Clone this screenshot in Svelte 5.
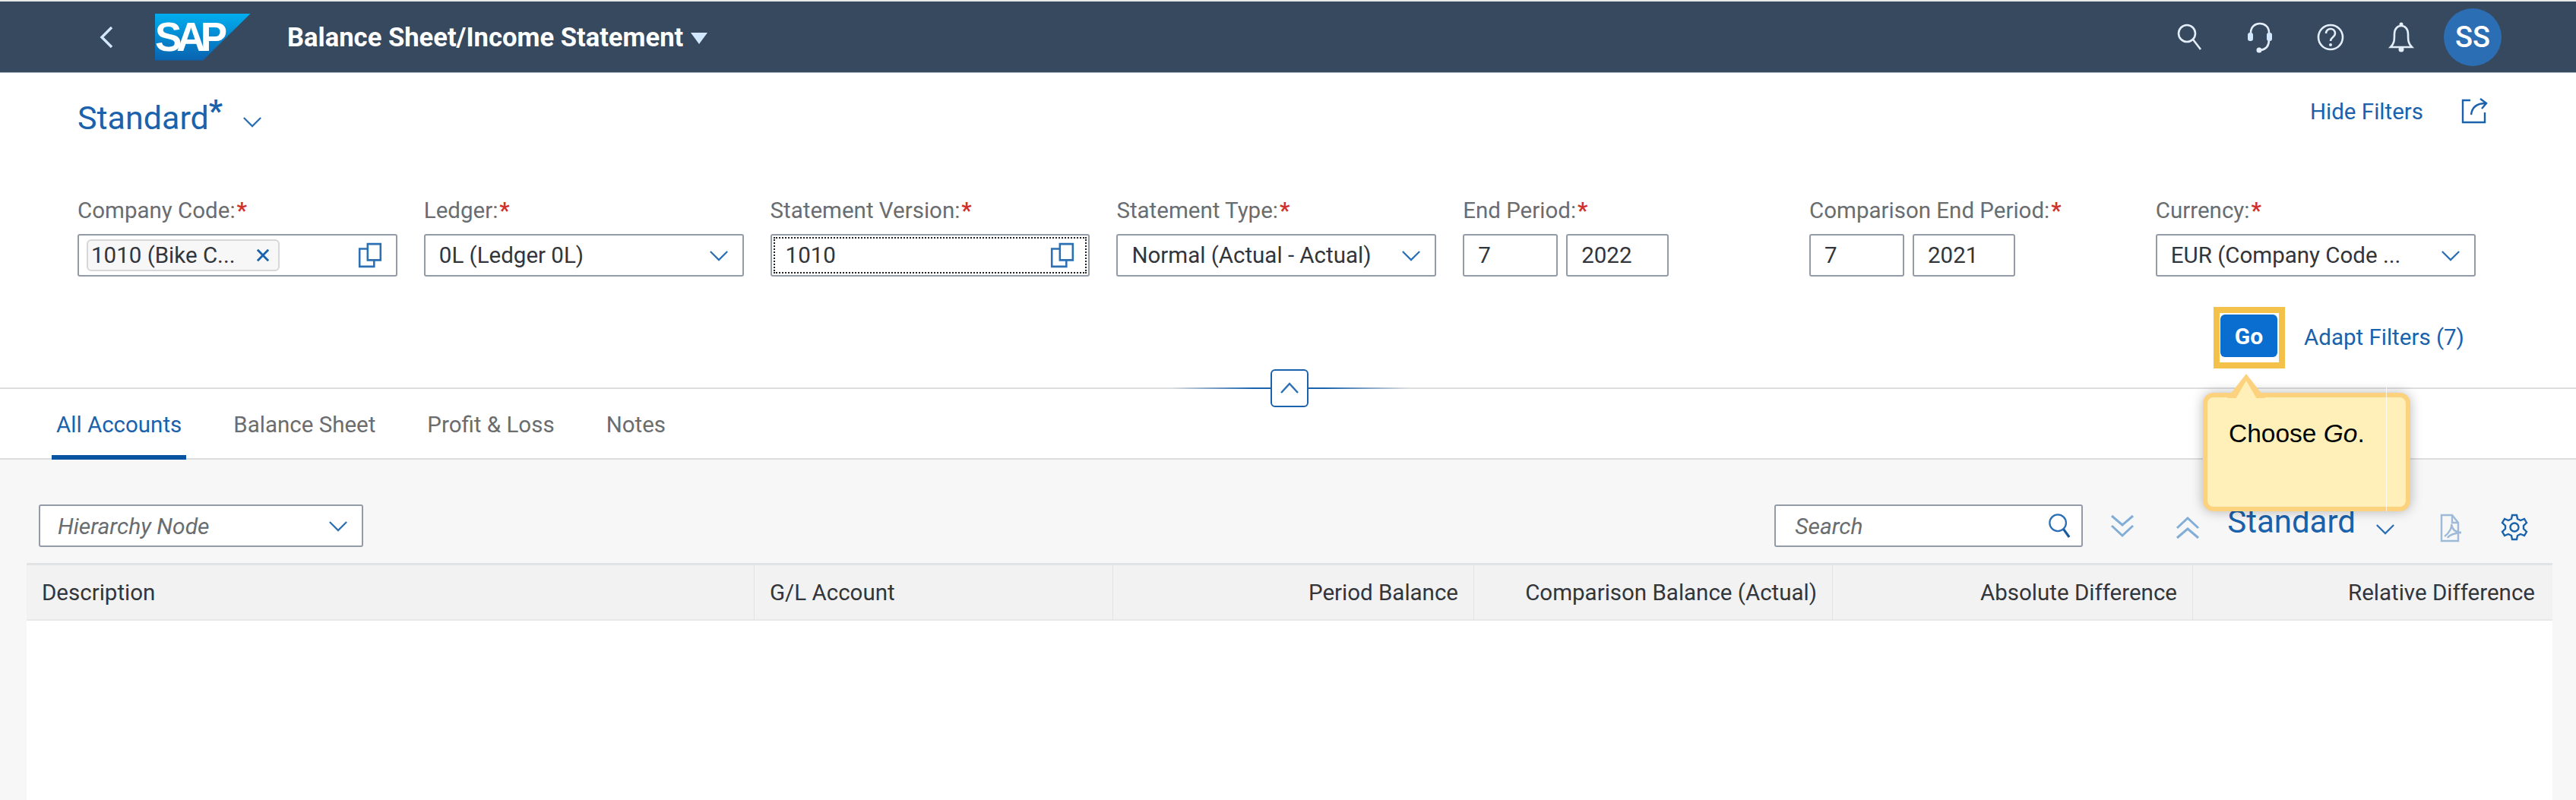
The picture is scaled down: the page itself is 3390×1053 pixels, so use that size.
<script>
	const filters = [
		{ label: 'Company Code:', kind: 'token', token: '1010 (Bike C...' },
		{ label: 'Ledger:', kind: 'select', value: '0L (Ledger 0L)' },
		{ label: 'Statement Version:', kind: 'value', value: '1010' },
		{ label: 'Statement Type:', kind: 'select', value: 'Normal (Actual - Actual)' },
		{ label: 'End Period:', kind: 'pair', first: '7', second: '2022' },
		{ label: 'Comparison End Period:', kind: 'pair', first: '7', second: '2021' },
		{ label: 'Currency:', kind: 'select', value: 'EUR (Company Code ...' }
	];
	const tabs = ['All Accounts', 'Balance Sheet', 'Profit & Loss', 'Notes'];
	const columns = [
		{ title: 'Description' },
		{ title: 'G/L Account' },
		{ title: 'Period Balance', right: true },
		{ title: 'Comparison Balance (Actual)', right: true },
		{ title: 'Absolute Difference', right: true },
		{ title: 'Relative Difference', right: true }
	];
</script>

{#snippet chevron()}
	<svg class="chev" viewBox="0 0 28 16"><path d="M2 2 L14 14 L26 2" /></svg>
{/snippet}

{#snippet copyIcon()}
	<svg class="copy" viewBox="0 0 30 32"><path d="M11 8 H2 V30 H20 V22 M12 2 H28 V22 H12 Z" /></svg>
{/snippet}

<div class="page">
	<header class="shell">
		<svg class="back" viewBox="0 0 20 32"><path d="M17 3 L4 16 L17 29" /></svg>
		<div class="logo"><span>SAP</span></div>
		<h1>Balance Sheet/Income Statement</h1>
		<span class="caret"></span>
		<div class="shell-icons">
			<svg viewBox="0 0 36 42"><circle cx="15" cy="16" r="11" /><path d="M23 24 L33 37" /></svg>
			<svg viewBox="0 0 36 42"><path d="M6 24 V15 C6 -1 30 -1 30 15 V24 C30 33 26 37 19 38" /><rect class="solid-dim" x="2" y="15" width="7" height="11" rx="3" /><rect class="solid-dim" x="27" y="15" width="7" height="11" rx="3" /><circle class="solid" cx="17" cy="38" r="3.5" /></svg>
			<svg viewBox="0 0 36 42"><circle cx="18" cy="21" r="16" /><path d="M12 16 C12 8 24 8 24 16 C24 21 18 21 18 26" /><circle class="solid" cx="18" cy="31" r="2" /></svg>
			<svg viewBox="0 0 36 42"><path d="M4 34 C9 29 9 25 9 17 C9 10 13 6 18 6 C23 6 27 10 27 17 C27 25 27 29 32 34 Z" /><circle class="solid" cx="18" cy="4" r="2.5" /><circle class="solid" cx="18" cy="37" r="3.5" /></svg>
		</div>
		<div class="avatar">SS</div>
	</header>

	<section class="filterbar">
		<div class="variant-row">
			<div class="variant">Standard<span class="star">*</span></div>
			{@render chevron()}
			<a class="hide">Hide Filters</a>
			<svg class="share" viewBox="0 0 36 34"><path d="M12 3 H2 V32 H31 V19 M13 22 C14 13 20 7 32 7 M25 1 L33 7 L27 14" /></svg>
		</div>

		<div class="filters">
			{#each filters as f}
				<div class="field">
					<div class="label">{f.label}<span class="req">*</span></div>
					{#if f.kind === 'pair'}
						<div class="pair">
							<div class="input first">{f.first}</div>
							<div class="input second">{f.second}</div>
						</div>
					{:else if f.kind === 'token'}
						<div class="input with-token">
							<span class="token">{f.token}<svg viewBox="0 0 14 14"><path d="M2 2 L12 12 M12 2 L2 12" /></svg></span>
							{@render copyIcon()}
						</div>
					{:else if f.kind === 'value'}
						<div class="input focused">
							<span>{f.value}</span>
							{@render copyIcon()}
						</div>
					{:else}
						<div class="input">
							<span>{f.value}</span>
							{@render chevron()}
						</div>
					{/if}
				</div>
			{/each}
		</div>

		<div class="actions">
			<div class="highlight"><button class="go">Go</button></div>
			<a class="adapt">Adapt Filters (7)</a>
		</div>

		<div class="collapse">
			<span class="glow"></span>
			<button aria-label="Collapse"><svg viewBox="0 0 26 16"><path d="M2 14 L13 2 L24 14" /></svg></button>
		</div>
	</section>

	<nav class="tabs">
		{#each tabs as tab, i}
			<div class="tab" class:active={i === 0}>{tab}</div>
		{/each}
	</nav>

	<main class="content">
		<div class="toolbar">
			<div class="input hierarchy">
				<span>Hierarchy Node</span>
				{@render chevron()}
			</div>
			<div class="tools">
				<div class="input search">
					<span>Search</span>
					<svg viewBox="0 0 32 36"><circle cx="14" cy="14" r="11.5" /><path class="dark" d="M22 23 L30 34" /></svg>
				</div>
				<svg class="dbl down" viewBox="0 0 32 32"><path d="M2 3 L16 15 L30 3 M2 16 L16 29 L30 16" /></svg>
				<svg class="dbl up" viewBox="0 0 32 32"><path d="M2 16 L16 3 L30 16 M2 29 L16 17 L30 29" /></svg>
				<div class="view">Standard</div>
				{@render chevron()}
				<svg class="pdf" viewBox="0 0 32 38"><path d="M18 2 H4 V36 H26 V12 Z M18 2 V12 H26 M8 30 C14 26 18 18 17 14 C18 20 22 25 30 25 C24 25 14 28 12 32" /></svg>
				<svg class="gear" viewBox="0 0 36 36"><circle cx="18" cy="18" r="5.5" /><path d="M15 2 H21 L22 7 L26 9 L31 7 L34 12 L30 16 V20 L34 24 L31 29 L26 27 L22 29 L21 34 H15 L14 29 L10 27 L5 29 L2 24 L6 20 V16 L2 12 L5 7 L10 9 L14 7 Z" /></svg>
			</div>
		</div>

		<div class="table">
			<div class="thead">
				{#each columns as c}
					<div class="th" class:right={c.right}>{c.title}</div>
				{/each}
			</div>
			<div class="tbody"></div>
		</div>
	</main>

	<div class="callout">
		<span class="tail"></span>
		<span class="seam"></span>
		<p>Choose <em>Go</em>.</p>
	</div>
</div>

<style>
	:global(body) {
		margin: 0;
		background: #fff;
	}

	.page {
		position: relative;
		width: 3390px;
		height: 1053px;
		overflow: hidden;
		display: flex;
		flex-direction: column;
		font-family: Roboto, "Liberation Sans", sans-serif;
		font-size: 29.5px;
		color: #32363a;
	}

	svg {
		display: block;
		flex: none;
		fill: none;
		stroke-width: 2.4;
	}

	/* shell bar */
	.shell {
		flex: none;
		box-sizing: border-box;
		height: 96px;
		border-top: 2px solid #e6e8ea;
		border-bottom: 1px solid #aab4bf;
		background: #37495e;
		display: flex;
		align-items: center;
		color: #fff;
	}

	.back {
		width: 20px;
		height: 32px;
		margin-left: 130px;
		stroke: #d1e8ff;
		stroke-width: 3.4;
	}

	.logo {
		width: 126px;
		height: 62px;
		margin-left: 54px;
		background: linear-gradient(#00aeef, #0a62b0);
		clip-path: polygon(0 0, 100% 0, 50% 100%, 0 100%);
	}

	.logo span {
		display: block;
		margin: 1px 0 0 0;
		font: bold 53px/60px "Liberation Sans", sans-serif;
		letter-spacing: -7px;
		color: #fff;
	}

	h1 {
		margin: 0 0 0 48px;
		font-size: 34.6px;
		font-weight: 700;
		white-space: nowrap;
	}

	.caret {
		width: 0;
		height: 0;
		margin: 4px 0 0 10px;
		border-left: 11px solid transparent;
		border-right: 11px solid transparent;
		border-top: 15px solid #d1e8ff;
	}

	.shell-icons {
		margin-left: auto;
		display: flex;
		gap: 57px;
	}

	.shell-icons svg {
		width: 36px;
		height: 42px;
		stroke: #e3eefa;
		stroke-width: 2.6;
	}

	.shell-icons .solid {
		fill: #e3eefa;
		stroke: none;
	}

	.shell-icons .solid-dim {
		fill: #d1e8ff;
		stroke: none;
	}

	.avatar {
		width: 76px;
		height: 76px;
		margin: 0 98px 0 38px;
		border-radius: 50%;
		background: #2b6eb4;
		font-size: 38px;
		font-weight: 500;
		display: flex;
		align-items: center;
		justify-content: center;
	}

	/* filter bar */
	.filterbar {
		position: relative;
		flex: none;
		box-sizing: border-box;
		height: 416px;
		padding: 0 0 0 102px;
		border-bottom: 2px solid #dcdddf;
	}

	.variant-row {
		height: 108px;
		display: flex;
		align-items: center;
		padding-right: 115px;
	}

	.variant {
		font-size: 43px;
		color: #1a62ab;
		padding-top: 9px;
	}

	.star {
		position: relative;
		top: -10px;
		font-size: 40px;
		line-height: 1;
		font-weight: 700;
	}

	.chev {
		width: 26px;
		height: 15px;
		stroke: #2b6fb5;
		stroke-width: 2.4;
	}

	.variant-row > .chev {
		margin: 21px 0 0 26px;
	}

	.hide {
		margin-left: auto;
		color: #1a62ab;
		padding-bottom: 6px;
	}

	.share {
		width: 36px;
		height: 34px;
		margin: 0 0 8px 50px;
		stroke: #1a62ab;
	}

	.filters {
		display: grid;
		grid-template-columns: repeat(7, 420.8px);
		column-gap: 35px;
		padding-top: 58px;
	}

	.label {
		height: 36px;
		line-height: 30px;
		margin-bottom: 10px;
		color: #6a6d70;
		white-space: nowrap;
	}

	.req {
		margin-left: 2px;
		color: #d0312d;
		font-weight: 700;
	}

	.input {
		position: relative;
		box-sizing: border-box;
		height: 56px;
		border: 2px solid #929ba6;
		border-radius: 3px;
		background: #fff;
		padding: 0 18px;
		display: flex;
		align-items: center;
		justify-content: space-between;
		white-space: nowrap;
	}

	.copy {
		width: 32px;
		height: 34px;
		stroke: #2b6fb5;
	}

	.with-token {
		padding: 0 18px 0 10px;
	}

	.token {
		box-sizing: border-box;
		width: 254px;
		height: 42px;
		padding: 0 10px 0 4px;
		border: 2px solid #d5d7d9;
		border-radius: 6px;
		background: #f7f7f7;
		display: flex;
		align-items: center;
		justify-content: space-between;
	}

	.token svg {
		width: 20px;
		height: 20px;
		stroke: #1a62ab;
		stroke-width: 2;
	}

	.focused {
		padding-right: 18px;
	}

	.focused::after {
		content: '';
		position: absolute;
		inset: 2px;
		border: 2px dotted #222;
	}

	.pair {
		display: flex;
		gap: 11px;
		width: 271px;
	}

	.pair .first {
		width: 125px;
	}

	.pair .second {
		width: 135px;
	}

	.actions {
		display: flex;
		align-items: center;
		height: 81px;
		margin-top: 40px;
		padding-left: 2811px;
	}

	.highlight {
		box-sizing: border-box;
		width: 94px;
		height: 81px;
		border: 8px solid #f4c24a;
		padding: 2px 0 0 1px;
		background: #fff;
	}

	.go {
		display: block;
		width: 75px;
		height: 56px;
		border: 0;
		border-radius: 6px;
		background: #0a6ed1;
		color: #fff;
		font: 700 30px Roboto, sans-serif;
		padding: 0;
	}

	.adapt {
		margin: -2px 0 0 25px;
		color: #1a62ab;
		white-space: nowrap;
	}

	.collapse {
		position: absolute;
		left: 1542px;
		bottom: -26px;
		width: 310px;
		height: 50px;
		display: flex;
		align-items: center;
		justify-content: center;
	}

	.glow {
		position: absolute;
		left: 0;
		right: 0;
		top: 24px;
		height: 2px;
		background: linear-gradient(90deg, transparent, #1a62ab 35%, #1a62ab 65%, transparent);
	}

	.collapse button {
		position: relative;
		box-sizing: border-box;
		width: 50px;
		height: 50px;
		padding: 0;
		border: 2px solid #1a62ab;
		border-radius: 6px;
		background: #fff;
		display: flex;
		align-items: center;
		justify-content: center;
	}

	.collapse svg {
		width: 26px;
		height: 16px;
		stroke: #2b6fb5;
	}

	/* tabs */
	.tabs {
		flex: none;
		box-sizing: border-box;
		height: 93px;
		padding-left: 68px;
		display: flex;
		gap: 56px;
		border-bottom: 2px solid #dcdddf;
		box-shadow: 0 2px 3px rgba(0, 0, 0, 0.06);
	}

	.tab {
		position: relative;
		padding: 0 6px;
		line-height: 94px;
		color: #6a6d70;
		font-size: 29.5px;
	}

	.tab.active {
		color: #1a62ab;
	}

	.tab.active::after {
		content: '';
		position: absolute;
		left: 0;
		right: 0;
		bottom: -2px;
		height: 6px;
		background: #0854a0;
	}

	/* content */
	.content {
		flex: 1;
		background: #f7f7f7;
		padding: 60px 31px 0 35px;
		display: flex;
		flex-direction: column;
	}

	.toolbar {
		display: flex;
		align-items: center;
		padding-left: 16px;
		height: 54px;
	}

	.hierarchy {
		width: 427px;
		padding-left: 23px;
		color: #6a6d70;
		font-style: italic;
		font-size: 30px;
	}

	.tools {
		margin-left: auto;
		display: flex;
		align-items: center;
	}

	.search {
		width: 406px;
		padding: 0 14px 0 25px;
		color: #6a6d70;
		font-style: italic;
		font-size: 30px;
	}

	.search svg {
		width: 30px;
		height: 34px;
		stroke: #2b6fb5;
	}

	.search .dark {
		stroke: #1a5a9c;
		stroke-width: 3.4;
	}

	.dbl {
		width: 32px;
		height: 32px;
		stroke: #82add6;
		stroke-width: 3;
	}

	.dbl.down {
		margin-left: 36px;
	}

	.dbl.up {
		margin-left: 54px;
		margin-top: 6px;
	}

	.view {
		margin-left: 36px;
		font-size: 42px;
		color: #1a62ab;
		line-height: 40px;
		margin-top: -10px;
	}

	.tools > .chev {
		margin: 8px 0 0 26px;
		stroke: #2b6fb5;
	}

	.pdf {
		width: 32px;
		height: 38px;
		margin: 6px 0 0 57px;
		stroke: #9dbbd8;
	}

	.gear {
		width: 36px;
		height: 36px;
		margin: 4px 32px 0 50px;
		stroke: #1a62ab;
	}

	.table {
		flex: 1;
		margin-top: 22px;
		display: flex;
		flex-direction: column;
		background: #fff;
	}

	.thead {
		flex: none;
		box-sizing: border-box;
		height: 76px;
		display: grid;
		grid-template-columns: 957px 472px 475px 472px 474px 474px;
		background: #f2f2f2;
		border-top: 3px solid #e2e3e4;
		border-bottom: 2px solid #e8e8e8;
	}

	.th {
		padding: 0 20px;
		line-height: 72px;
		color: #32363a;
		white-space: nowrap;
		border-left: 1px solid #e2e3e4;
	}

	.th:first-child {
		border-left: 0;
	}

	.th:last-child {
		padding-right: 23px;
	}

	.th.right {
		text-align: right;
	}

	.tbody {
		flex: 1;
		background: #fff;
	}

	/* tutorial callout */
	.callout {
		position: absolute;
		left: 2899px;
		top: 517px;
		box-sizing: border-box;
		width: 273px;
		height: 156px;
		padding: 29px 0 0 28px;
		border: 6px solid #fdd27e;
		border-radius: 14px;
		background: #fef0b8;
		box-shadow: 0 0 16px rgba(0, 0, 0, 0.28);
		font-family: "Liberation Sans", sans-serif;
		font-size: 33.5px;
		color: #000;
	}

	.callout p {
		margin: 0;
		position: relative;
	}

	.tail {
		position: absolute;
		left: 26px;
		top: -31px;
		width: 50px;
		height: 32px;
		background: #fdd27e;
		clip-path: polygon(50% 0, 100% 100%, 0 100%);
	}

	.tail::after {
		content: '';
		position: absolute;
		inset: 9px 7px -8px;
		background: #fef0b8;
		clip-path: polygon(50% 0, 100% 100%, 0 100%);
	}

	.seam {
		position: absolute;
		left: 235px;
		top: -30px;
		bottom: -6px;
		width: 1px;
		background: rgba(255, 255, 255, 0.75);
	}
</style>
